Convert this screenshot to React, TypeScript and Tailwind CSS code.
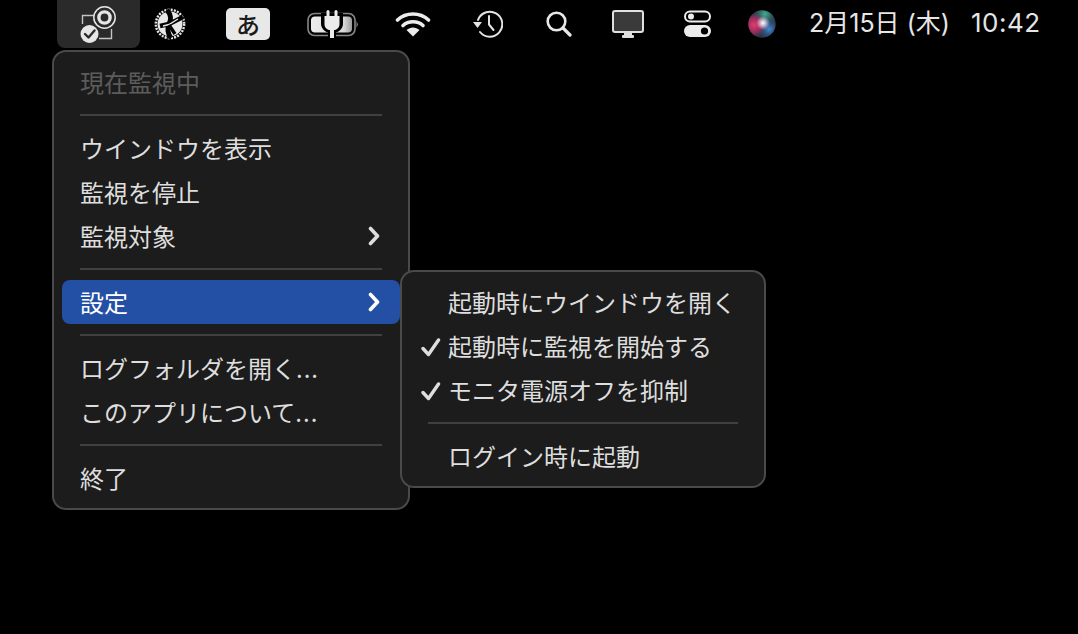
import React from 'react';

const Chevron = () => (
    <svg width="12" height="20" viewBox="0 0 12 20" fill="none" className="shrink-0">
        <path d="M2.5 2.5 L9.5 10 L2.5 17.5" stroke="currentColor" strokeWidth="3.6" strokeLinecap="round" strokeLinejoin="round" />
    </svg>
);

const Check = () => (
    <svg width="20" height="20" viewBox="0 0 20 20" fill="none" className="shrink-0">
        <path d="M2 11.5 L7.5 17.5 L17.5 3" stroke="#dedede" strokeWidth="3.4" strokeLinecap="round" strokeLinejoin="round" />
    </svg>
);

const MonitorAppIcon = () => (
    <svg width="50" height="44" viewBox="0 0 50 44" fill="none">
        <path d="M20 13.5 H8.5 V22 M25 36.5 H37.5 V27" stroke="#c4c4c4" strokeWidth="1.4" />
        <circle cx="30.5" cy="15.5" r="10.7" fill="#2a2a2a" stroke="#e6e6e6" strokeWidth="1.5" />
        <circle cx="30.5" cy="15.5" r="5.6" stroke="#e6e6e6" strokeWidth="3.4" />
        <circle cx="15.5" cy="32" r="9" fill="#e6e6e6" />
        <path d="M11 32 L14.5 35.5 L20.5 28.5" stroke="#2a2a2a" strokeWidth="2.4" strokeLinecap="round" strokeLinejoin="round" />
    </svg>
);

const GlobeIcon = () => (
    <svg width="32" height="32" viewBox="0 0 32 32" fill="none">
        <circle cx="16" cy="16" r="12.5" fill="#e8e8e8" />
        <circle cx="16" cy="16" r="14.2" stroke="#e8e8e8" strokeWidth="2.4" strokeDasharray="2 1.2" />
        <path d="M13 2 C18 8 17 12 15 16 C13 21 14 26 17 30" stroke="#000" strokeWidth="5" />
        <path d="M6 18 L15 16 L29 9" stroke="#000" strokeWidth="4.5" />
        <path d="M9 18 L15 16.5 L24 11" stroke="#e8e8e8" strokeWidth="1.4" />
        <path d="M15 17 L21 26" stroke="#000" strokeWidth="3.4" />
    </svg>
);

const BatteryIcon = () => (
    <svg width="52" height="28" viewBox="0 0 52 28" fill="none">
        <defs>
            <linearGradient id="batteryFill" x1="0" y1="0" x2="1" y2="0">
                <stop offset="0%" stopColor="#ececec" />
                <stop offset="80%" stopColor="#d8d8d8" />
                <stop offset="100%" stopColor="#9a9a9a" />
            </linearGradient>
        </defs>
        <rect x="2" y="3.5" width="47" height="22" rx="6.5" stroke="#868686" strokeWidth="1.6" />
        <rect x="5" y="6.5" width="41" height="16" rx="4" fill="url(#batteryFill)" />
        <path d="M50.5 11 L52 14.5 L50.5 18 Z" fill="#868686" />
        <path d="M15 3 H37 V14 C37 19 32 22 30 22.5 V28 H22 V22.5 C20 22 15 19 15 14 Z" fill="#000" />
        <path d="M18.5 6 H33.5 V14 C33.5 17.5 31 20 28 20 V28 H24 V20 C21 20 18.5 17.5 18.5 14 Z" fill="#ececec" />
        <path d="M22 1.5 V6 M30 1.5 V6" stroke="#ececec" strokeWidth="3" strokeLinecap="round" />
    </svg>
);

const WifiIcon = () => (
    <svg width="36" height="26" viewBox="0 0 36 26" fill="none">
        <path d="M2.5 9 C11 1 25 1 33.5 9" stroke="#ececec" strokeWidth="3.6" strokeLinecap="round" />
        <path d="M8 14.5 C13.5 9.5 22.5 9.5 28 14.5" stroke="#ececec" strokeWidth="3.6" strokeLinecap="round" />
        <path d="M11.5 19 C15.5 15.5 20.5 15.5 24.5 19 L18 25.5 Z" fill="#ececec" />
    </svg>
);

const TimeMachineIcon = () => (
    <svg width="30" height="28" viewBox="0 0 30 28" fill="none">
        <path d="M5 10 A12.5 12.5 0 1 1 7 22" stroke="#e4e4e4" strokeWidth="2" strokeLinecap="round" />
        <path d="M0 12 H9 L4.5 18 Z" fill="#e4e4e4" />
        <path d="M16 6 V14.5 L20.5 20" stroke="#e4e4e4" strokeWidth="2" strokeLinecap="round" strokeLinejoin="round" />
    </svg>
);

const SearchIcon = () => (
    <svg width="26" height="26" viewBox="0 0 26 26" fill="none">
        <circle cx="10.5" cy="10.5" r="8.8" stroke="#e8e8e8" strokeWidth="2.6" />
        <path d="M17 17 L24 24" stroke="#e8e8e8" strokeWidth="3.2" strokeLinecap="round" />
    </svg>
);

const DisplayIcon = () => (
    <svg width="32" height="28" viewBox="0 0 32 28" fill="none">
        <rect x="1" y="1" width="30" height="21" rx="2" fill="#3a3a3a" stroke="#e0e0e0" strokeWidth="2" />
        <path d="M12 22 H20 V25 H12 Z" fill="#e0e0e0" />
        <rect x="10" y="25" width="12" height="3" rx="1" fill="#e0e0e0" />
    </svg>
);

const ControlCenterIcon = () => (
    <svg width="28" height="28" viewBox="0 0 28 28" fill="none">
        <rect x="1" y="1.5" width="25" height="10" rx="5" stroke="#ececec" strokeWidth="2" />
        <circle cx="7" cy="6.5" r="3" fill="#ececec" />
        <rect x="0" y="15" width="27" height="12" rx="6" fill="#ececec" />
        <circle cx="20.5" cy="21" r="3.6" fill="#000" />
    </svg>
);

const SiriIcon = () => (
    <svg width="28" height="28" viewBox="0 0 28 28">
        <defs>
            <radialGradient id="siriPink">
                <stop offset="0%" stopColor="#e83a70" />
                <stop offset="60%" stopColor="#b02c60" stopOpacity="0.8" />
                <stop offset="100%" stopColor="#a02c5c" stopOpacity="0" />
            </radialGradient>
            <radialGradient id="siriGreen">
                <stop offset="0%" stopColor="#3fb090" />
                <stop offset="100%" stopColor="#2a7a70" stopOpacity="0" />
            </radialGradient>
            <radialGradient id="siriBlue">
                <stop offset="0%" stopColor="#3f90d0" />
                <stop offset="100%" stopColor="#2a50a0" stopOpacity="0" />
            </radialGradient>
            <radialGradient id="siriCore">
                <stop offset="0%" stopColor="#ffffff" />
                <stop offset="40%" stopColor="#f4eaf6" stopOpacity="0.7" />
                <stop offset="100%" stopColor="#e0d0f0" stopOpacity="0" />
            </radialGradient>
            <clipPath id="siriClip">
                <circle cx="14" cy="14" r="13.7" />
            </clipPath>
        </defs>
        <g clipPath="url(#siriClip)">
            <circle cx="14" cy="14" r="14" fill="#2c3644" />
            <circle cx="17" cy="4" r="12" fill="url(#siriGreen)" />
            <circle cx="21" cy="19" r="11" fill="url(#siriBlue)" />
            <circle cx="6" cy="15" r="12" fill="url(#siriPink)" />
            <circle cx="15" cy="13" r="7" fill="url(#siriCore)" />
        </g>
    </svg>
);

const Separator = ({ className }: { className: string }) => (
    <div className={`h-[22px] flex items-center ${className}`}>
        <div className="h-[2px] w-full bg-[#404040]" />
    </div>
);

const MenuBar = () => (
    <div className="flex h-[48px] items-center pl-[57px] text-[#e6e6e6]">
        <div className="flex h-[48px] w-[83px] items-center justify-center rounded-b-lg bg-[#2a2a2a]">
            <MonitorAppIcon />
        </div>
        <div className="flex w-[60px] justify-center"><GlobeIcon /></div>
        <div className="flex w-[96px] justify-center">
            <div className="flex h-[32px] w-[44px] items-center justify-center rounded-[5px] bg-[#e8e8e8] text-[24px] font-medium leading-none text-[#1a1a1a]">あ</div>
        </div>
        <div className="flex w-[72px] justify-center"><BatteryIcon /></div>
        <div className="flex w-[90px] justify-center"><WifiIcon /></div>
        <div className="flex w-[60px] justify-center"><TimeMachineIcon /></div>
        <div className="flex w-[82px] justify-center"><SearchIcon /></div>
        <div className="flex w-[56px] justify-center"><DisplayIcon /></div>
        <div className="flex w-[84px] justify-center"><ControlCenterIcon /></div>
        <div className="flex w-[44px] justify-center"><SiriIcon /></div>
        <div className="ml-[25px] flex w-[162px] whitespace-nowrap pb-[2px] font-['Inter','Noto_Sans_CJK_JP',sans-serif] text-[25px] leading-none">2月15日 (木)</div>
        <div className="whitespace-nowrap pb-[2px] font-['Inter',sans-serif] text-[26px] leading-none tracking-[0.5px]">10:42</div>
    </div>
);

const Dots = () => <span className="tracking-[1px]">...</span>;

const MainMenu = () => (
    <div className="absolute left-[52px] top-[50px] h-[460px] w-[358px] rounded-[14px] border-2 border-[#4a4a4a] bg-[#1c1c1c] px-2 pt-[8px] text-[24px] text-[#dedede]">
        <div className="flex h-[44px] items-center pb-[1px] pl-[18px] text-[#5c5c5c]">現在監視中</div>
        <Separator className="mx-[18px]" />
        <div className="flex h-[44px] items-center pb-[1px] pl-[18px]">ウインドウを表示</div>
        <div className="flex h-[44px] items-center pb-[1px] pl-[18px]">監視を停止</div>
        <div className="flex h-[44px] items-center justify-between pl-[18px] pr-[20px]">
            <span className="pb-[1px]">監視対象</span>
            <Chevron />
        </div>
        <Separator className="mx-[18px]" />
        <div className="flex h-[44px] items-center justify-between rounded-lg bg-[#2350a5] pl-[18px] pr-[20px] text-white">
            <span className="pb-[1px]">設定</span>
            <Chevron />
        </div>
        <Separator className="mx-[18px]" />
        <div className="flex h-[44px] items-center pb-[1px] pl-[18px]"><span>ログフォルダを開く<Dots /></span></div>
        <div className="flex h-[44px] items-center pb-[1px] pl-[18px]"><span>このアプリについて<Dots /></span></div>
        <Separator className="mx-[18px]" />
        <div className="flex h-[44px] items-center pb-[1px] pl-[18px]">終了</div>
    </div>
);

const subItems = [
    { label: '起動時にウインドウを開く', checked: false },
    { label: '起動時に監視を開始する', checked: true },
    { label: 'モニタ電源オフを抑制', checked: true },
];

const SubMenu = () => (
    <div className="absolute left-[400px] top-[270px] h-[218px] w-[366px] rounded-[14px] border-2 border-[#4a4a4a] bg-[#1c1c1c] pt-[8px] text-[24px] text-[#dedede]">
        {subItems.map((item) => (
            <div key={item.label} className="flex h-[44px] items-center">
                <div className="flex w-[46px] justify-end pr-[7px] pt-[1px]">{item.checked && <Check />}</div>
                <span className="whitespace-nowrap pb-[1px]">{item.label}</span>
            </div>
        ))}
        <Separator className="mx-[26px]" />
        <div className="flex h-[44px] items-center pb-[1px] pl-[46px]">ログイン時に起動</div>
    </div>
);

export default function App() {
    return (
        <div
            className="relative h-[634px] w-[1078px] overflow-hidden bg-black"
            style={{ fontFamily: '"Noto Sans CJK JP", "Noto Sans", sans-serif' }}
        >
            <MenuBar />
            <MainMenu />
            <SubMenu />
        </div>
    );
}
